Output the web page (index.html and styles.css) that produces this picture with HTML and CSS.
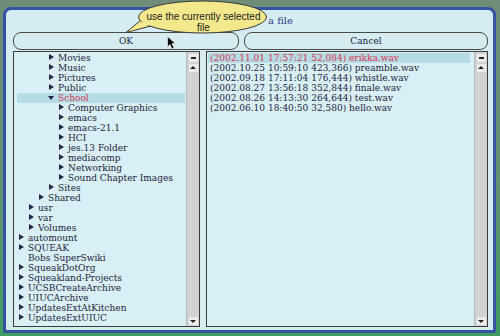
FILE: index.html
```html
<!DOCTYPE html>
<html lang="en">
<head>
    <meta charset="UTF-8">
    <title>Choose a file</title>
    <link rel="stylesheet" href="styles.css">
</head>
<body>
    <div class="window">
        <div class="title">a file</div>
        <div class="buttons">
            <button class="btn btn-ok">OK</button>
            <button class="btn btn-cancel">Cancel</button>
        </div>
        <div class="panes">
            <div class="pane pane-dirs">
                <div class="list">
                    <div class="row l3"><span class="tri"></span>Movies</div>
                    <div class="row l3"><span class="tri"></span>Music</div>
                    <div class="row l3"><span class="tri"></span>Pictures</div>
                    <div class="row l3"><span class="tri"></span>Public</div>
                    <div class="row l3 selected"><span class="tri open"></span>School</div>
                    <div class="row l4"><span class="tri"></span>Computer Graphics</div>
                    <div class="row l4"><span class="tri"></span>emacs</div>
                    <div class="row l4"><span class="tri"></span>emacs-21.1</div>
                    <div class="row l4"><span class="tri"></span>HCI</div>
                    <div class="row l4"><span class="tri"></span>jes.13 Folder</div>
                    <div class="row l4"><span class="tri"></span>mediacomp</div>
                    <div class="row l4"><span class="tri"></span>Networking</div>
                    <div class="row l4"><span class="tri"></span>Sound Chapter Images</div>
                    <div class="row l3"><span class="tri"></span>Sites</div>
                    <div class="row l2"><span class="tri"></span>Shared</div>
                    <div class="row l1"><span class="tri"></span>usr</div>
                    <div class="row l1"><span class="tri"></span>var</div>
                    <div class="row l1"><span class="tri"></span>Volumes</div>
                    <div class="row l0"><span class="tri"></span>automount</div>
                    <div class="row l0"><span class="tri"></span>SQUEAK</div>
                    <div class="row l0"><span class="tri none"></span>Bobs SuperSwiki</div>
                    <div class="row l0"><span class="tri"></span>SqueakDotOrg</div>
                    <div class="row l0"><span class="tri"></span>Squeakland-Projects</div>
                    <div class="row l0"><span class="tri"></span>UCSBCreateArchive</div>
                    <div class="row l0"><span class="tri"></span>UIUCArchive</div>
                    <div class="row l0"><span class="tri"></span>UpdatesExtAtKitchen</div>
                    <div class="row l0"><span class="tri"></span>UpdatesExtUIUC</div>
                </div>
                <div class="scrollbar">
                    <span class="sb-btn sb-menu"></span>
                    <span class="sb-btn sb-up"></span>
                    <span class="sb-track"></span>
                    <span class="sb-btn sb-down"></span>
                </div>
            </div>
            <div class="pane pane-files">
                <div class="list">
                    <div class="file selected">(2002.11.01 17:57:21 52,084) erikka.wav</div>
                    <div class="file">(2002.10.25 10:59:10 423,366) preamble.wav</div>
                    <div class="file">(2002.09.18 17:11:04 176,444) whistle.wav</div>
                    <div class="file">(2002.08.27 13:56:18 352,844) finale.wav</div>
                    <div class="file">(2002.08.26 14:13:30 264,644) test.wav</div>
                    <div class="file">(2002.06.10 18:40:50 32,580) hello.wav</div>
                </div>
                <div class="scrollbar">
                    <span class="sb-btn sb-menu"></span>
                    <span class="sb-btn sb-up"></span>
                    <span class="sb-track"></span>
                    <span class="sb-btn sb-down"></span>
                </div>
            </div>
        </div>
    </div>

    <div class="balloon">
        <svg width="146" height="36" viewBox="0 0 146 36">
            <path d="M17 20 L2 32.5 L27 26 Z" fill="#f3e98c" stroke="#3a3a3a" stroke-width="1"/>
            <ellipse cx="78.5" cy="17" rx="64" ry="16" fill="#f3e98c" stroke="#3a3a3a" stroke-width="1"/>
            <path d="M18 21.5 L5 31 L26 25 Z" fill="#f3e98c"/>
        </svg>
        <div class="balloon-text">use the currently selected<br>file</div>
    </div>

    <svg class="cursor" width="10" height="14" viewBox="0 0 10 14">
        <path d="M0.5 0.5 L0.5 11 L3 8.5 L5 13 L7 12 L5 7.5 L8.5 7.5 Z" fill="#000" stroke="#fff" stroke-width="0.6"/>
    </svg>
</body>
</html>
```

FILE: styles.css
```css
body {
    margin: 0;
    width: 500px;
    height: 336px;
    overflow: hidden;
    background: linear-gradient(#6f8d79 0%, #5f9270 60%, #3f9c60 100%);
    font-family: 'DejaVu Serif', serif;
    color: #1e1e3a;
}
.window {
    box-sizing: border-box;
    margin: 7px 4px 0 3px;
    height: 326px;
    border: 3px solid #3553a3;
    border-radius: 8px 8px 2px 2px;
    background-color: #d5ecf2;
    padding: 0 5px 3px 7px;
    display: flex;
    flex-direction: column;
}
.title {
    height: 22px;
    line-height: 22px;
    font-size: 10px;
    color: #34467e;
    padding-left: 255px;
}
.buttons {
    display: flex;
    gap: 5px;
    height: 18px;
}
.btn {
    box-sizing: border-box;
    height: 18px;
    border: 1px solid #4a4a4a;
    border-radius: 8px;
    background-color: #d5ecf2;
    font-family: 'DejaVu Serif', serif;
    font-size: 9px;
    color: #1e1e3a;
    padding: 0;
}
.btn-ok {
    width: 226px;
}
.btn-cancel {
    flex: 1;
}
.panes {
    flex: 1;
    display: flex;
    gap: 6px;
    margin-top: 1px;
}
.pane {
    box-sizing: border-box;
    border: 1px solid #3c3c3c;
    background-color: #d8eff5;
    display: flex;
}
.pane-dirs {
    width: 187px;
}
.pane-files {
    flex: 1;
}
.list {
    flex: 1;
    padding: 1px 1px 0 3px;
    font-size: 9px;
    line-height: 10px;
    white-space: nowrap;
    overflow: hidden;
}
.row {
    height: 10px;
}
.row.selected,
.file.selected {
    background-color: #b6dce6;
    color: #d8344a;
}
.l0 { padding-left: 2px; }
.l1 { padding-left: 12px; }
.l2 { padding-left: 22px; }
.l3 { padding-left: 32px; }
.l4 { padding-left: 42px; }
.tri {
    display: inline-block;
    width: 9px;
    height: 10px;
    vertical-align: top;
    position: relative;
}
.tri::before {
    content: "";
    position: absolute;
    left: 0;
    top: 1px;
    border-left: 5px solid #22244a;
    border-top: 3.5px solid transparent;
    border-bottom: 3.5px solid transparent;
}
.tri.open::before {
    left: -1px;
    top: 3px;
    border-top: 4px solid #22244a;
    border-left: 3.5px solid transparent;
    border-right: 3.5px solid transparent;
    border-bottom: none;
}
.tri.none::before {
    display: none;
}
.pane-files .list {
    padding: 1px 4px 0 1px;
}
.file {
    height: 10px;
    padding-left: 2px;
}
.scrollbar {
    width: 12px;
    background-color: #d2d2d2;
    border-left: 1px solid #b8b8b8;
    display: flex;
    flex-direction: column;
    align-items: center;
    padding: 2px 0 1px;
}
.sb-btn {
    width: 9px;
    height: 8px;
    background-color: #ececec;
    position: relative;
}
.sb-up {
    margin-top: 2px;
}
.sb-track {
    flex: 1;
}
.sb-menu::before {
    content: "";
    position: absolute;
    left: 2px;
    top: 3px;
    width: 5px;
    height: 2px;
    background-color: #222;
}
.sb-up::before,
.sb-down::before {
    content: "";
    position: absolute;
    left: 1.5px;
    border-left: 3px solid transparent;
    border-right: 3px solid transparent;
}
.sb-up::before {
    top: 2px;
    border-bottom: 3px solid #222;
}
.sb-down::before {
    top: 3px;
    border-top: 3px solid #222;
}
.balloon {
    position: absolute;
    left: 124px;
    top: 0;
    width: 146px;
    height: 36px;
}
.balloon svg {
    display: block;
}
.balloon-text {
    position: absolute;
    left: 11px;
    top: 11px;
    width: 137px;
    text-align: center;
    font-family: 'Liberation Sans', Arial, sans-serif;
    font-size: 10px;
    line-height: 11px;
    color: #1a1a1a;
}
.cursor {
    position: absolute;
    left: 167px;
    top: 36px;
}
```
